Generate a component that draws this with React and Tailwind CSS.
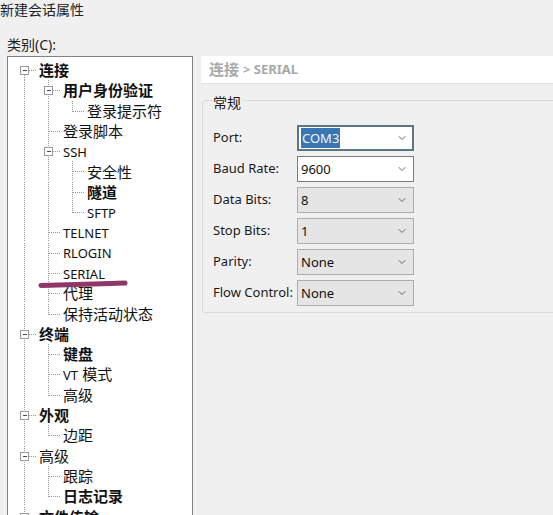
import React from 'react';
import { ChevronDown } from 'lucide-react';

// session tree, as shown in the category panel
const TREE = [
  {
    label: '连接', bold: true, children: [
      { label: '用户身份验证', bold: true, children: [{ label: '登录提示符' }] },
      { label: '登录脚本' },
      {
        label: 'SSH', en: true, children: [
          { label: '安全性' },
          { label: '隧道', bold: true },
          { label: 'SFTP', en: true },
        ],
      },
      { label: 'TELNET', en: true },
      { label: 'RLOGIN', en: true },
      { label: 'SERIAL', en: true },
      { label: '代理' },
      { label: '保持活动状态' },
    ],
  },
  {
    label: '终端', bold: true, children: [
      { label: '键盘', bold: true },
      { label: 'VT 模式', mixed: true },
      { label: '高级' },
    ],
  },
  { label: '外观', bold: true, children: [{ label: '边距' }] },
  {
    label: '高级', children: [
      { label: '跟踪' },
      { label: '日志记录', bold: true },
    ],
  },
  { label: '文件传输', bold: true, children: [] },
];

const ROW_H = 20.3;
const LINE = '#999999';

function flatten(nodes, level = 0, trail = [], out = []) {
  nodes.forEach((n, i) => {
    const last = i === nodes.length - 1;
    out.push({ ...n, level, trail, last, first: level === 0 && i === 0 });
    if (n.children && n.children.length) flatten(n.children, level + 1, [...trail, !last], out);
  });
  return out;
}

function PassCell({ on }) {
  return (
    <svg width="24" height={ROW_H} className="shrink-0" shapeRendering="crispEdges">
      {on && <line x1="12.5" y1="0" x2="12.5" y2={ROW_H} stroke={LINE} strokeDasharray="1 1" />}
    </svg>
  );
}

function NodeCell({ first, last, expander }) {
  const mid = 10.5;
  return (
    <svg width="24" height={ROW_H} className="shrink-0" shapeRendering="crispEdges">
      <line x1="12.5" y1={first ? mid : 0} x2="12.5" y2={last ? mid : ROW_H} stroke={LINE} strokeDasharray="1 1" />
      <line x1="13" y1={mid} x2="24" y2={mid} stroke={LINE} strokeDasharray="1 1" />
      {expander && (
        <>
          <rect x="8.5" y="6.5" width="8" height="8" fill="#fff" stroke="#9a9a9a" />
          <line x1="10.5" y1={mid} x2="15" y2={mid} stroke="#4a4a4a" />
        </>
      )}
    </svg>
  );
}

function Label({ item }) {
  const weight = item.bold ? 'font-bold' : 'font-normal';
  if (item.mixed) {
    const [en, cjk] = item.label.split(' ');
    return (
      <span className="whitespace-nowrap">
        <span className="text-[13px]">{en}</span>{' '}
        <span className="text-[15px]">{cjk}</span>
      </span>
    );
  }
  return (
    <span className={`whitespace-nowrap ${weight} ${item.en ? 'text-[13px]' : 'text-[15px]'}`}>
      {item.label}
    </span>
  );
}

function Tree() {
  const rows = flatten(TREE);
  return (
    <div className="w-[186px] shrink-0 h-[480px] bg-white border border-[#828282] pt-[3px] pl-[4px] overflow-hidden">
      {rows.map((r, i) => (
        <div key={i} className="flex items-center" style={{ height: ROW_H }}>
          {r.trail.map((on, d) => (
            <PassCell key={d} on={on} />
          ))}
          <NodeCell first={r.first} last={r.last} expander={!!r.children} />
          <div className="pl-[3px] leading-[20px] text-[#111]">
            <Label item={r} />
          </div>
        </div>
      ))}
    </div>
  );
}

function Combo({ value, variant }) {
  const box = {
    focus: 'bg-white border-2 border-[#5b7784] pl-[2px] pr-[4px]',
    open: 'bg-white border border-[#7a7a7a] pl-[3px] pr-[5px]',
    idle: 'bg-[#e5e5e5] border border-[#adadad] pl-[3px] pr-[5px]',
  }[variant];
  return (
    <div className={`flex items-center justify-between w-[117px] h-[26px] ${box}`}>
      {variant === 'focus' ? (
        <span className="bg-[#3b76b4] text-[#eef4fa] px-[1px] leading-[20px]">{value}</span>
      ) : (
        <span className="leading-[20px]">{value}</span>
      )}
      <ChevronDown size={12} strokeWidth={1.6} className="text-[#444]" />
    </div>
  );
}

const FIELDS = [
  ['Port:', 'COM3', 'focus'],
  ['Baud Rate:', '9600', 'open'],
  ['Data Bits:', '8', 'idle'],
  ['Stop Bits:', '1', 'idle'],
  ['Parity:', 'None', 'idle'],
  ['Flow Control:', 'None', 'idle'],
];

export default function App() {
  return (
    <div
      className="relative w-[553px] h-[515px] overflow-hidden bg-[#f0f0f0] text-[#111]"
      style={{ fontFamily: '"Noto Sans", "Noto Sans CJK SC", sans-serif' }}
    >
      <div className="h-[20px] leading-[20px] text-[14px] text-[#222]">新建会话属性</div>
      <div className="mt-[14px] h-[21px] leading-[21px] pl-[7px] text-[14px] text-[#222]">类别(C):</div>

      <div className="flex mt-[1px] pl-[7px]">
        <Tree />

        <div className="ml-[8px] w-[370px] shrink-0">
          <div className="h-[28px] bg-white border-b border-[#e2e2e2] flex items-center pl-[8px] text-[#a8a8a8] font-bold">
            <span className="text-[15px]">连接</span>
            <span className="text-[13px] ml-[4px]">&gt; SERIAL</span>
          </div>

          <fieldset className="mt-[3px] ml-[1px] border border-[#d9d9d9] rounded-[3px] px-[10px] pb-[6px]">
            <legend className="ml-[-1px] px-[1px] pt-[6px] leading-[20px] text-[14px] text-[#1a1a1a]">常规</legend>
            <div className="mt-[12px] flex flex-col gap-[5px]">
              {FIELDS.map(([label, value, variant]) => (
                <div key={label} className="flex items-center text-[13px]">
                  <span className="w-[84px] shrink-0 whitespace-nowrap text-[#1a1a1a]">{label}</span>
                  <Combo value={value} variant={variant} />
                </div>
              ))}
            </div>
          </fieldset>
        </div>
      </div>

      {/* hand-drawn marker under SERIAL */}
      <svg className="absolute left-[36px] top-[276px]" width="96" height="16">
        <path d="M5 9.5 C 30 8.5, 60 8, 89 7" stroke="#8e3768" strokeWidth="5" strokeLinecap="round" fill="none" />
      </svg>
    </div>
  );
}
